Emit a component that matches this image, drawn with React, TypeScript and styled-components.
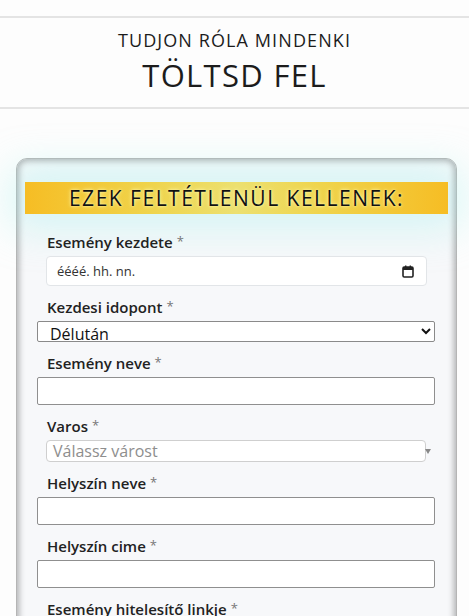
import React from "react";
import styled, { createGlobalStyle } from "styled-components";

const Global = createGlobalStyle`
  html, body { margin: 0; padding: 0; background: #fdfdfd; }
  body { font-family: "Open Sans", "DejaVu Sans", sans-serif; color: #212529; }
  * { box-sizing: border-box; }
`;

const Page = styled.div`
  padding-top: 16px;
  width: 469px;
  overflow: hidden;
`;

const Header = styled.header`
  border-top: 2px solid #e4e4e4;
  border-bottom: 2px solid #e4e4e4;
  padding: 11px 0 14px;
  text-align: center;
  color: #1c1c1c;
`;

const Kicker = styled.div`
  font-size: 18px;
  line-height: 22px;
  letter-spacing: 1.1px;
`;

const Title = styled.h1`
  margin: 6px 0 0;
  font-size: 31px;
  line-height: 36px;
  font-weight: 400;
  letter-spacing: 1.3px;
`;

const Card = styled.section`
  margin: 49px 12px 40px 16px;
  background: #f7f8fa;
  border-radius: 11px;
  border: 1px solid #b5b5b5;
  box-shadow: inset 0 0 6px 2px rgba(0, 0, 0, 0.3);
  padding: 23px 0 20px;
`;

const Banner = styled.div`
  margin: 0 8px;
  height: 32px;
  background: linear-gradient(90deg, #f6bd24 0%, #efd44c 30%, #ece070 50%, #efd44c 70%, #f6bd24 100%);
  box-shadow: 0 0 40px 14px rgba(150, 240, 235, 0.35);
  display: flex;
  align-items: center;
  justify-content: center;
  font-size: 21px;
  letter-spacing: 1.5px;
  color: #111;
  text-shadow: 0 0 4px #fff6a8, 0 0 2px #fff6a8;
`;

const Fields = styled.div`
  padding: 18px 21px 0 20px;
  display: flex;
  flex-direction: column;
  gap: 11px;
`;

const Field = styled.div`
  display: flex;
  flex-direction: column;
`;

const Label = styled.label`
  margin: 0 0 4px 10px;
  font-size: 15px;
  line-height: 20px;
  height: 20px;
  font-weight: 600;
  color: #222;
`;

const Star = styled.span`
  color: #777;
  font-size: 13px;
  font-weight: 400;
  margin-left: 4px;
  position: relative;
  top: -2px;
`;

const DateBox = styled.div`
  margin: 0 8px 0 9px;
  height: 30px;
  background: #fff;
  border: 1px solid #e2e5e8;
  border-radius: 4px;
  display: flex;
  align-items: center;
  justify-content: space-between;
  padding: 0 12px 0 10px;
  font-size: 13px;
  color: #333;
`;

const NativeSelect = styled.select`
  height: 21px;
  width: 100%;
  font-family: "Open Sans", sans-serif;
  font-size: 16px;
  color: #111;
  background: #fff;
  border: 1px solid #8a8a8a;
  border-radius: 2px;
  padding: 0 8px;
`;

const TextInput = styled.input`
  height: 28px;
  width: 100%;
  background: #fff;
  border: 1px solid #8f8f8f;
  border-radius: 2px;
  font-size: 15px;
  padding: 0 8px;
`;

const Select2Wrap = styled.div`
  margin: 0 9px 0 9px;
  position: relative;
`;

const Select2Box = styled.div`
  height: 22px;
  background: #fff;
  border: 1px solid #cfcfcf;
  border-radius: 4px;
  display: flex;
  align-items: center;
  padding-left: 6px;
  font-size: 16px;
  color: #8e8e8e;
`;

const Caret = styled.span`
  position: absolute;
  right: -5px;
  top: 9px;
  width: 0;
  height: 0;
  border-left: 3px solid transparent;
  border-right: 3px solid transparent;
  border-top: 5px solid #888;
`;

const CalendarIcon = () => (
  <svg width="12" height="13" viewBox="0 0 12 13" fill="none">
    <rect x="1" y="2" width="10" height="10" rx="1.2" stroke="#222" strokeWidth="1.6" />
    <rect x="1" y="2" width="10" height="3" fill="#222" />
    <rect x="3" y="0.5" width="1.4" height="2.5" fill="#222" />
    <rect x="7.6" y="0.5" width="1.4" height="2.5" fill="#222" />
  </svg>
);

export default function App() {
  return (
    <Page>
      <Global />
      <Header>
        <Kicker>TUDJON RÓLA MINDENKI</Kicker>
        <Title>TÖLTSD FEL</Title>
      </Header>
      <Card>
        <Banner>EZEK FELTÉTLENÜL KELLENEK:</Banner>
        <Fields>
          <Field>
            <Label>Esemény kezdete<Star>*</Star></Label>
            <DateBox>
              <span>éééé. hh. nn.</span>
              <CalendarIcon />
            </DateBox>
          </Field>
          <Field>
            <Label>Kezdesi idopont<Star>*</Star></Label>
            <NativeSelect defaultValue="du">
              <option value="de">Délelőtt</option>
              <option value="du">Délután</option>
              <option value="este">Este</option>
            </NativeSelect>
          </Field>
          <Field>
            <Label>Esemény neve<Star>*</Star></Label>
            <TextInput type="text" />
          </Field>
          <Field>
            <Label>Varos<Star>*</Star></Label>
            <Select2Wrap>
              <Select2Box>Válassz várost</Select2Box>
              <Caret />
            </Select2Wrap>
          </Field>
          <Field>
            <Label>Helyszín neve<Star>*</Star></Label>
            <TextInput type="text" />
          </Field>
          <Field>
            <Label>Helyszín cime<Star>*</Star></Label>
            <TextInput type="text" />
          </Field>
          <Field>
            <Label>Esemény hitelesítő linkje<Star>*</Star></Label>
            <TextInput type="text" />
          </Field>
        </Fields>
      </Card>
    </Page>
  );
}
